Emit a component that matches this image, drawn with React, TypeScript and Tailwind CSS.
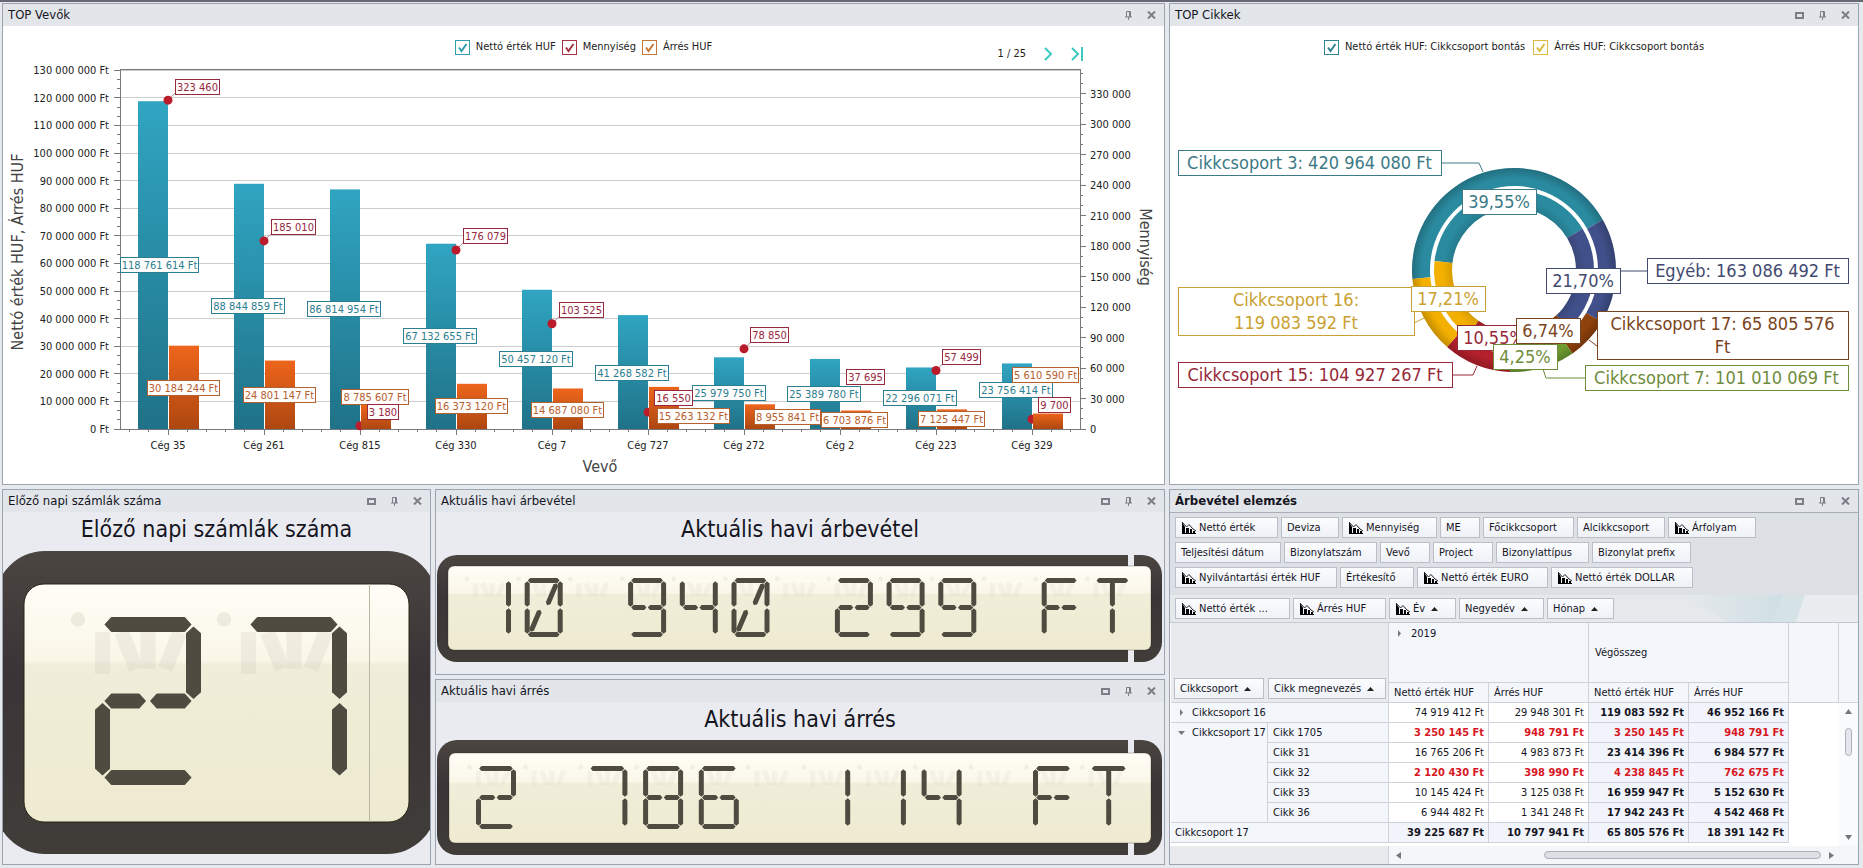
import type { ReactNode } from "react"

const categories = [
  { name: "Cég 35", net: 118761614, margin: 30184244, qty: 323460 },
  { name: "Cég 261", net: 88844859, margin: 24801147, qty: 185010 },
  { name: "Cég 815", net: 86814954, margin: 8785607, qty: 3180 },
  { name: "Cég 330", net: 67132655, margin: 16373120, qty: 176079 },
  { name: "Cég 7", net: 50457120, margin: 14687080, qty: 103525 },
  { name: "Cég 727", net: 41268582, margin: 15263132, qty: 16550 },
  { name: "Cég 272", net: 25979750, margin: 8955841, qty: 78850 },
  { name: "Cég 2", net: 25389780, margin: 6703876, qty: 37695 },
  { name: "Cég 223", net: 22296071, margin: 7125447, qty: 57499 },
  { name: "Cég 329", net: 23756414, margin: 5610590, qty: 9700 },
]

const TEAL = "#2a7f92"
const ORANGE = "#b5602f"
const RED = "#96283f"

// label boxes after overlap resolution: left, top, width, text, colour
const barLabels: [number, number, number, string, string][] = [
  [176, 79, 45, "323 460", RED],
  [272, 219, 45, "185 010", RED],
  [464, 228, 45, "176 079", RED],
  [560, 302, 45, "103 525", RED],
  [751, 327, 39, "78 850", RED],
  [847, 369, 39, "37 695", RED],
  [943, 349, 39, "57 499", RED],
  [121, 257, 79, "118 761 614 Ft", TEAL],
  [212, 298, 74, "88 844 859 Ft", TEAL],
  [308, 301, 74, "86 814 954 Ft", TEAL],
  [404, 328, 74, "67 132 655 Ft", TEAL],
  [500, 351, 74, "50 457 120 Ft", TEAL],
  [596, 365, 74, "41 268 582 Ft", TEAL],
  [693, 385, 74, "25 979 750 Ft", TEAL],
  [788, 386, 74, "25 389 780 Ft", TEAL],
  [884, 390, 74, "22 296 071 Ft", TEAL],
  [980, 382, 74, "23 756 414 Ft", TEAL],
  [148, 380, 73, "30 184 244 Ft", ORANGE],
  [244, 387, 73, "24 801 147 Ft", ORANGE],
  [342, 389, 68, "8 785 607 Ft", ORANGE],
  [436, 398, 73, "16 373 120 Ft", ORANGE],
  [532, 402, 73, "14 687 080 Ft", ORANGE],
  [658, 408, 73, "15 263 132 Ft", ORANGE],
  [755, 409, 67, "8 955 841 Ft", ORANGE],
  [822, 412, 67, "6 703 876 Ft", ORANGE],
  [919, 411, 67, "7 125 447 Ft", ORANGE],
  [1013, 367, 67, "5 610 590 Ft", ORANGE],
  [368, 404, 32, "3 180", RED],
  [655, 390, 39, "16 550", RED],
  [1039, 397, 33, "9 700", RED],
]

const BASE = 429
const LEFT = 121
const RIGHT = 1081
const yMoney = (v: number) => BASE - (v / 10000000) * 27.6
const yQty = (v: number) => BASE - (v / 30000) * 30.5
const xCat = (i: number) => LEFT + 48 + i * 96
const spaced = (n: number) => n.toString().replace(/\B(?=(\d{3})+(?!\d))/g, " ")
const range = (n: number) => Array.from({ length: n }, (_, i) => i)

function WindowButtons({ max = true }: { max?: boolean }) {
  return (
    <div className="flex items-center gap-[7px] pr-[5px] text-[#7b7e86]">
      {max && (
        <button aria-label="Maximize" className="flex h-4 w-4 items-center justify-center">
          <svg width="9" height="7" viewBox="0 0 9 7" fill="none" stroke="currentColor" strokeWidth="2">
            <rect x="1" y="1" width="7" height="5" />
          </svg>
        </button>
      )}
      <button aria-label="Pin" className="flex h-4 w-4 items-center justify-center">
        <svg width="7" height="9" viewBox="0 0 7 9" fill="none" stroke="currentColor">
          <path d="M1.500 6V.5h4V6M4.500 1v5M0 6h7M3.500 6v3" />
        </svg>
      </button>
      <button aria-label="Close" className="flex h-4 w-4 items-center justify-center">
        <svg width="9" height="8" viewBox="0 0 9 8" fill="none" stroke="currentColor" strokeWidth="2">
          <path d="M1 .5l7 7M8 .5l-7 7" />
        </svg>
      </button>
    </div>
  )
}

function Panel({
  title,
  children,
  bold = false,
  max = true,
  body = "bg-white",
}: {
  title: string
  children: ReactNode
  bold?: boolean
  max?: boolean
  body?: string
}) {
  return (
    <section className="flex min-h-0 min-w-0 flex-col overflow-hidden border border-[#9ba2b0] bg-[#e2e5e9]">
      <header className="flex h-[22px] shrink-0 items-center justify-between pl-[5px]">
        <h2 className={bold ? "text-[13px] font-bold leading-4" : "text-[13px] leading-4"}>{title}</h2>
        <WindowButtons max={max} />
      </header>
      <div className={"flex min-h-0 flex-1 flex-col " + body}>{children}</div>
    </section>
  )
}

function LegendItem({ label, color }: { label: string; color: string }) {
  return (
    <label className="flex items-center gap-[6px] text-[11px] leading-4" style={{ color }}>
      <span className="relative flex">
        <input type="checkbox" defaultChecked className="h-[15px] w-[15px] appearance-none border border-current bg-white" />
        <svg className="pointer-events-none absolute left-0 top-0" width="15" height="15" fill="none" stroke="currentColor" strokeWidth="2">
          <path d="M4 7.5l2.5 3.5L11.500 4" />
        </svg>
      </span>
      <span className="text-[#222]">{label}</span>
    </label>
  )
}

function BarChart() {
  return (
    <svg viewBox="4 68 1161 416" className="block min-h-0 w-full flex-1 overflow-visible text-[11px]">
      <defs>
        <linearGradient id="net" x1="0" y1="0" x2="0" y2="1">
          <stop offset="0" stopColor="#30a5c2" />
          <stop offset="1" stopColor="#1f7287" />
        </linearGradient>
        <linearGradient id="margin" x1="0" y1="0" x2="0" y2="1">
          <stop offset="0" stopColor="#ee651b" />
          <stop offset="1" stopColor="#ad4710" />
        </linearGradient>
      </defs>

      <g shapeRendering="crispEdges">
        {range(13).map((i) => (
          <path key={i} d={`M${LEFT} ${yMoney((i + 1) * 10000000)}H${RIGHT}`} stroke="#cdcdcd" />
        ))}
        <path d={`M${LEFT} ${BASE + 0.5}V69H${RIGHT}V${BASE + 0.5}Z`} fill="none" stroke="#77777c" />
        {range(40).map((i) => {
          const y = yMoney((i * 10000000) / 3)
          return <path key={i} d={`M${i % 3 === 0 ? LEFT - 6 : LEFT - 3} ${y}H${LEFT}`} stroke="#77777c" />
        })}
        {range(36).map((i) => (
          <path key={i} d={`M${RIGHT} ${yQty(i * 10000)}h${i % 3 === 0 ? 6 : 3}`} stroke="#77777c" />
        ))}
        {range(50).map((i) => (
          <path key={i} d={`M${LEFT + 9.6 + i * 19.2} ${BASE}v${i % 5 === 2 ? 6 : 3}`} stroke="#77777c" />
        ))}
      </g>

      {categories.map((c, i) => (
        <rect key={c.name} x={xCat(i) - 30} y={yMoney(c.net)} width="30" height={BASE - yMoney(c.net)} fill="url(#net)" />
      ))}
      {categories.map((c, i) => (
        <g key={c.name}>
          {c.qty > 50000 && (
            <path d={`M${xCat(i)} ${yQty(c.qty)}l9 -9`} stroke="#b58a96" />
          )}
          <circle cx={xCat(i)} cy={yQty(c.qty)} r="4.500" fill="#bb1c2c" />
        </g>
      ))}
      {categories.map((c, i) => (
        <rect key={c.name} x={xCat(i) + 1} y={yMoney(c.margin)} width="30" height={BASE - yMoney(c.margin)} fill="url(#margin)" />
      ))}

      {barLabels.map(([x, y, w, text, color]) => (
        <g key={text}>
          <rect x={x + 0.5} y={y + 0.5} width={w - 1} height="15" fill="#fffdfc" stroke={color} />
          <text x={x + w / 2} y={y + 12} textAnchor="middle" fill={color}>
            {text}
          </text>
        </g>
      ))}

      <g fill="#222">
        {range(14).map((i) => (
          <text key={i} x="110" y={yMoney(i * 10000000) + 4} textAnchor="end">
            {spaced(i * 10000000)} Ft
          </text>
        ))}
        {range(12).map((i) => (
          <text key={i} x="1091" y={yQty(i * 30000) + 4}>
            {spaced(i * 30000)}
          </text>
        ))}
        {categories.map((c, i) => (
          <text key={c.name} x={xCat(i)} y="449" textAnchor="middle">
            {c.name}
          </text>
        ))}
      </g>
      <g fill="#444" className="text-[16px]" textAnchor="middle">
        <text x="601" y="472">Vevő</text>
        <text transform="translate(24 252) rotate(-90)">Nettó érték HUF, Árrés HUF</text>
        <text transform="translate(1141 247) rotate(90)">Mennyiség</text>
      </g>
    </svg>
  )
}

const CX = 1515
const CY = 270

function arc(r0: number, r1: number, from: number, to: number) {
  const pt = (r: number, deg: number) => {
    const a = ((deg - 90) * Math.PI) / 180
    return `${(CX + r * Math.cos(a)).toFixed(2)} ${(CY + r * Math.sin(a)).toFixed(2)}`
  }
  const large = to - from > 180 ? 1 : 0
  return `M${pt(r1, from)}A${r1} ${r1} 0 ${large} 1 ${pt(r1, to)}L${pt(r0, to)}A${r0} ${r0} 0 ${large} 0 ${pt(r0, from)}Z`
}

const outerRing: [number, number, string][] = [
  [-95, 60.5, "#2a8a9f"],
  [60.5, 120.7, "#41508a"],
  [120.7, 145, "#8f410b"],
  [145, 182.3, "#6f9c30"],
  [182.3, 221, "#b4202c"],
  [221, 265, "#f4b000"],
]

const innerRing: [number, number, string][] = [
  [-83.5, 59, "#2a8a9f"],
  [59, 137, "#41508a"],
  [137, 161, "#8f410b"],
  [161, 177, "#6f9c30"],
  [177, 215, "#b4202c"],
  [215, 276.5, "#f4b000"],
]

const pieLabels: { x: number; y: number; w: number; h: number; color: string; lines: string[]; lead?: string }[] = [
  { x: 1179, y: 150, w: 263, h: 26, color: "#3c7a87", lines: ["Cikkcsoport 3: 420 964 080 Ft"], lead: "M1442 163h38l4 9" },
  { x: 1648, y: 258, w: 201, h: 26, color: "#434a70", lines: ["Egyéb: 163 086 492 Ft"], lead: "M1617 271h31" },
  { x: 1598, y: 311, w: 251, h: 49, color: "#7a4420", lines: ["Cikkcsoport 17: 65 805 576", "Ft"], lead: "M1590 340l8 6" },
  { x: 1586, y: 365, w: 263, h: 26, color: "#6f8c3c", lines: ["Cikkcsoport 7: 101 010 069 Ft"], lead: "M1586 378h-39l-3 -9" },
  { x: 1179, y: 287, w: 236, h: 49, color: "#c9a132", lines: ["Cikkcsoport 16:", "119 083 592 Ft"], lead: "M1415 323l10 -5" },
  { x: 1179, y: 362, w: 274, h: 26, color: "#962838", lines: ["Cikkcsoport 15: 104 927 267 Ft"], lead: "M1453 375h21l4 -9" },
  { x: 1463, y: 189, w: 74, h: 26, color: "#3c7a87", lines: ["39,55%"] },
  { x: 1547, y: 268, w: 74, h: 26, color: "#434a70", lines: ["21,70%"] },
  { x: 1412, y: 286, w: 74, h: 26, color: "#c9a132", lines: ["17,21%"] },
  { x: 1458, y: 325, w: 74, h: 26, color: "#962838", lines: ["10,55%"] },
  { x: 1494, y: 344, w: 64, h: 26, color: "#6f8c3c", lines: ["4,25%"] },
  { x: 1517, y: 318, w: 64, h: 26, color: "#7a4420", lines: ["6,74%"] },
]

function DonutChart() {
  return (
    <svg viewBox="1171 68 688 416" className="block min-h-0 w-full flex-1 text-[18px]">
      <defs>
        <radialGradient id="shade" gradientUnits="userSpaceOnUse" cx={CX} cy={CY} r="102">
          <stop offset="0.6" stopColor="#000" stopOpacity="0.12" />
          <stop offset="0.7" stopColor="#000" stopOpacity="0" />
          <stop offset="0.9" stopColor="#000" stopOpacity="0" />
          <stop offset="1" stopColor="#000" stopOpacity="0.2" />
        </radialGradient>
      </defs>
      {outerRing.map(([a, b, color]) => (
        <path key={color} d={arc(84, 102, a, b)} fill={color} />
      ))}
      {innerRing.map(([a, b, color]) => (
        <path key={color} d={arc(62, 80, a, b)} fill={color} />
      ))}
      <circle cx={CX} cy={CY} r="93" fill="none" stroke="url(#shade)" strokeWidth="18" />
      <circle cx={CX} cy={CY} r="71" fill="none" stroke="url(#shade)" strokeWidth="18" />
      {pieLabels.map((l) => (
        <g key={l.lines[0]}>
          {l.lead && <path d={l.lead} fill="none" stroke={l.color} />}
          <rect x={l.x + 0.5} y={l.y + 0.5} width={l.w} height={l.h - 1} fill="#fff" stroke={l.color} />
          {l.lines.map((line, i) => (
            <text key={line} x={l.x + l.w / 2} y={l.y + 19 + i * 23} textAnchor="middle" fill={l.color}>
              {line}
            </text>
          ))}
        </g>
      ))}
    </svg>
  )
}

// Segments in a unit cell: a top, b/c right, d bottom, e/f left, g/h middle halves,
// i/j slash of the zero, k/l centre stem
const segments: Record<string, [number, number, number, number]> = {
  a: [0, 0, 1, 0],
  b: [1, 0, 1, 0.5],
  c: [1, 0.5, 1, 1],
  d: [0, 1, 1, 1],
  e: [0, 0.5, 0, 1],
  f: [0, 0, 0, 0.5],
  g: [0, 0.5, 0.5, 0.5],
  h: [0.5, 0.5, 1, 0.5],
  i: [0.9, 0.04, 0.6, 0.47],
  j: [0.4, 0.53, 0.1, 0.96],
  k: [0.5, 0, 0.5, 0.5],
  l: [0.5, 0.5, 0.5, 1],
}

const glyphs: Record<string, string> = {
  "0": "abcdefij",
  "1": "bc",
  "2": "abghed",
  "4": "fghbc",
  "6": "afghecd",
  "7": "abc",
  "8": "abcdefgh",
  "9": "abfghcd",
  F: "afghe",
  T: "akl",
}

type LcdProps = {
  text: string
  viewBox: string
  frame: [number, number, number, number, number]
  screen: [number, number, number, number, number]
  x: number
  y: number
  w: number
  h: number
  t: number
  pitch: number
  seam?: "line" | "gap"
}

function Lcd({ text, viewBox, frame, screen, x, y, w, h, t, pitch, seam = "gap" }: LcdProps) {
  const id = "lcd" + text.length
  const [sx, sy, sw, sh, sr] = screen
  const [fx, fy, fw, fh, fr] = frame
  const ghost = seam === "line" ? 0.3 : 0.18

  const draw = (name: string, ox: number) => {
    const [x1, y1, x2, y2] = segments[name]
    const px = (v: number) => ox + t / 2 + v * (w - t)
    const py = (v: number) => y + t / 2 + v * (h - t)
    const ax = px(x1)
    const ay = py(y1)
    const dx = px(x2) - ax
    const dy = py(y2) - ay
    const len = Math.hypot(dx, dy)
    const inset = (t * 0.58) / len
    return (
      <line
        key={name}
        x1={ax + dx * inset}
        y1={ay + dy * inset}
        x2={ax + dx * (1 - inset)}
        y2={ay + dy * (1 - inset)}
        markerStart={`url(#${id}tip)`}
        markerEnd={`url(#${id}tip)`}
      />
    )
  }

  return (
    <svg viewBox={viewBox} role="img" aria-label={text} className="block min-h-0 w-full flex-1">
      <defs>
        <marker id={id + "tip"} viewBox="0 0 10 10" refX="5" refY="5" markerWidth="1" markerHeight="1" orient="auto">
          <path d="M5 0L9.500 5 5 10 .5 5Z" fill="#504b41" />
        </marker>
        <linearGradient id={id + "frame"} x1="0" y1="0" x2="0" y2="1">
          <stop offset="0" stopColor="#4b4541" />
          <stop offset="0.4" stopColor="#3b3437" />
          <stop offset="1" stopColor="#403d39" />
        </linearGradient>
        <linearGradient id={id + "screen"} x1="0" y1="0" x2="0" y2="1">
          <stop offset="0" stopColor="#fffdf6" />
          <stop offset="0.32" stopColor="#faf7e9" />
          <stop offset="0.34" stopColor="#f0edd9" />
          <stop offset="1" stopColor="#efebd1" />
        </linearGradient>
      </defs>
      <rect x={fx} y={fy} width={fw} height={fh} rx={fr} fill={`url(#${id}frame)`} />
      {seam === "gap" && <rect x="1129" y={fy} width="6" height={fh} fill="#eaebf0" />}
      <rect x={sx} y={sy} width={sw} height={sh} rx={sr} fill={`url(#${id}screen)`} stroke="#2a2413" strokeOpacity={seam === "line" ? 1 : 0.3} />
      {seam === "line" && <path d={`M370.5 ${sy}v${sh}`} stroke="#b9b6a4" />}
      {[...text].map((ch, i) => (
        <g key={i} stroke="#d4d1c4" strokeOpacity={ghost} strokeWidth={t} fill="#d4d1c4" fillOpacity={ghost + 0.1}>
          <circle cx={x + i * pitch - w * 0.16} cy={y + h * 0.015} r={t * 0.48} stroke="none" />
          <path
            fill="none"
            d={`M${x + i * pitch + t / 2} ${y + t}v${h * 0.25}M${x + i * pitch + w * 0.25} ${y + t}l${w * 0.14} ${h * 0.22}M${x + i * pitch + w / 2} ${y + t}v${h * 0.22}M${x + i * pitch + w * 0.8} ${y + t}l${-w * 0.14} ${h * 0.22}`}
          />
        </g>
      ))}
      <g stroke="#504b41" strokeWidth={t}>
        {[...text].map((ch, i) => (
          <g key={i}>{[...(glyphs[ch] ?? "")].map((s) => draw(s, x + i * pitch))}</g>
        ))}
      </g>
    </svg>
  )
}

function ChartGlyph() {
  return (
    <svg width="16" height="14" viewBox="0 0 16 14" className="shrink-0" aria-hidden="true">
      <path d="M1 1v12h3V6zM5 7h3v6H5zM9 8h2v5H9zM12 10h2v3h-2z" fill="#000" />
      <path d="M1 12.500h14" stroke="#000" />
      <path d="M1 1l4.500 5L8 3.500l4 4.500 3 2" fill="none" stroke="#222" />
    </svg>
  )
}

type Field = { label: string; width: string; measure?: boolean; sort?: boolean }

function Chip({ label, width, measure, sort }: Field) {
  return (
    <button
      className={
        "flex h-[21px] shrink-0 items-center border border-[#b9bec9] bg-linear-to-b from-[#fbfcfe] to-[#eef1f6] pl-[5px] text-left text-[11px] leading-4 whitespace-nowrap " +
        width
      }
    >
      {measure && <ChartGlyph />}
      <span className={measure ? "pl-[2px]" : ""}>{label}</span>
      {sort && (
        <svg width="7" height="4" viewBox="0 0 7 4" className="ml-[6px]" aria-hidden="true">
          <path d="M0 4L3.500 0 7 4z" fill="#222" />
        </svg>
      )}
    </button>
  )
}

const filterRows: Field[][] = [
  [
    { label: "Nettó érték", width: "w-[103px]", measure: true },
    { label: "Deviza", width: "w-[58px]" },
    { label: "Mennyiség", width: "w-[95px]", measure: true },
    { label: "ME", width: "w-[40px]" },
    { label: "Főcikkcsoport", width: "w-[91px]" },
    { label: "Alcikkcsoport", width: "w-[88px]" },
    { label: "Árfolyam", width: "w-[88px]", measure: true },
  ],
  [
    { label: "Teljesítési dátum", width: "w-[106px]" },
    { label: "Bizonylatszám", width: "w-[93px]" },
    { label: "Vevő", width: "w-[50px]" },
    { label: "Project", width: "w-[60px]" },
    { label: "Bizonylattípus", width: "w-[93px]" },
    { label: "Bizonylat prefix", width: "w-[99px]" },
  ],
  [
    { label: "Nyilvántartási érték HUF", width: "w-[162px]", measure: true },
    { label: "Értékesítő", width: "w-[74px]" },
    { label: "Nettó érték EURO", width: "w-[131px]", measure: true },
    { label: "Nettó érték DOLLAR", width: "w-[142px]", measure: true },
  ],
]

const dataFields: Field[] = [
  { label: "Nettó érték ...", width: "w-[115px]", measure: true },
  { label: "Árrés HUF", width: "w-[93px]", measure: true },
  { label: "Év", width: "w-[67px]", measure: true, sort: true },
  { label: "Negyedév", width: "w-[85px]", sort: true },
  { label: "Hónap", width: "w-[67px]", sort: true },
]

const rows: { item: string; values: string[]; low?: boolean }[] = [
  { item: "Cikk 1705", values: ["3 250 145 Ft", "948 791 Ft", "3 250 145 Ft", "948 791 Ft"], low: true },
  { item: "Cikk 31", values: ["16 765 206 Ft", "4 983 873 Ft", "23 414 396 Ft", "6 984 577 Ft"] },
  { item: "Cikk 32", values: ["2 120 430 Ft", "398 990 Ft", "4 238 845 Ft", "762 675 Ft"], low: true },
  { item: "Cikk 33", values: ["10 145 424 Ft", "3 125 038 Ft", "16 959 947 Ft", "5 152 630 Ft"] },
  { item: "Cikk 36", values: ["6 944 482 Ft", "1 341 248 Ft", "17 942 243 Ft", "4 542 468 Ft"] },
]

function ValueCells({ values, low, total }: { values: string[]; low?: boolean; total?: boolean }) {
  return (
    <>
      {values.map((v, i) => {
        const tone = low ? "font-bold text-[#d8161f] " : total || i > 1 ? "font-bold " : ""
        const bg = total || i > 1 ? "bg-[#f1f4fa] " : "bg-white "
        return (
          <td key={i} className={"border-b border-r border-[#cdd2db] pr-1 text-right whitespace-nowrap " + tone + bg}>
            {v}
          </td>
        )
      })}
      <td className="bg-white" />
    </>
  )
}

function Expander({ open = false }: { open?: boolean }) {
  return (
    <button aria-label={open ? "Collapse" : "Expand"} className="inline-flex h-3 w-5 items-center justify-center">
      <svg width="7" height="7" viewBox="0 0 7 7" fill="#777">
        {open ? <path d="M0 2h7L3.500 6z" /> : <path d="M2 0v7l3-3.500z" />}
      </svg>
    </button>
  )
}

function PivotTable() {
  const line = "border-b border-r border-[#cdd2db] "
  return (
    <table className="w-full table-fixed border-separate border-spacing-0 text-[11px] leading-4">
      <colgroup>
        <col className="w-[97px]" />
        <col className="w-[121px]" />
        <col className="w-[100px]" />
        <col className="w-[100px]" />
        <col className="w-[100px]" />
        <col className="w-[100px]" />
        <col />
      </colgroup>
      <thead className="bg-[#f3f6fa] text-left">
        <tr className="h-[60px]">
          <th colSpan={2} rowSpan={2} className={line + "bg-[#e8eaee] pb-[3px] pl-[3px] align-bottom font-normal"}>
            <div className="flex gap-1">
              <Chip label="Cikkcsoport" width="w-[90px]" sort />
              <Chip label="Cikk megnevezés" width="w-[118px]" sort />
            </div>
          </th>
          <th colSpan={2} className={line + "pt-[3px] align-top font-normal"}>
            <Expander />
            <span className="pl-[2px]">2019</span>
          </th>
          <th colSpan={2} className={line + "pl-[6px] font-normal"}>Végösszeg</th>
          <th rowSpan={2} className={line} />
        </tr>
        <tr className="h-5">
          {["Nettó érték HUF", "Árrés HUF", "Nettó érték HUF", "Árrés HUF"].map((h, i) => (
            <th key={i} className={line + "pl-[5px] font-normal whitespace-nowrap"}>{h}</th>
          ))}
        </tr>
      </thead>
      <tbody>
        <tr className="h-5">
          <td colSpan={2} className={line + "bg-[#f3f6fa]"}>
            <Expander />
            <span className="pl-px">Cikkcsoport 16</span>
          </td>
          <ValueCells values={["74 919 412 Ft", "29 948 301 Ft", "119 083 592 Ft", "46 952 166 Ft"]} />
        </tr>
        {rows.map((r, i) => (
          <tr key={r.item} className="h-5">
            {i === 0 && (
              <td rowSpan={5} className={line + "bg-[#f3f6fa] pt-[2px] align-top whitespace-nowrap"}>
                <Expander open />
                <span className="pl-px">Cikkcsoport 17</span>
              </td>
            )}
            <td className={line + "bg-[#f3f6fa] pl-[5px]"}>{r.item}</td>
            <ValueCells values={r.values} low={r.low} />
          </tr>
        ))}
        <tr className="h-5">
          <td colSpan={2} className={line + "bg-[#f3f6fa] pl-1"}>Cikkcsoport 17</td>
          <ValueCells values={["39 225 687 Ft", "10 797 941 Ft", "65 805 576 Ft", "18 391 142 Ft"]} total />
        </tr>
      </tbody>
    </table>
  )
}

function Pivot() {
  return (
    <>
      <div className="flex h-[83px] shrink-0 flex-col gap-1 border-t border-[#a9afba] bg-[#dde0e4] pl-[5px] pt-1">
        {filterRows.map((row, i) => (
          <div key={i} className="flex gap-[3px]">
            {row.map((f) => (
              <Chip key={f.label} {...f} />
            ))}
          </div>
        ))}
      </div>
      <div className="flex h-7 shrink-0 items-center justify-between border-b border-[#c3c8d1] bg-[#e6e9ec] pl-[5px]">
        <div className="flex gap-[3px]">
          {dataFields.map((f) => (
            <Chip key={f.label} {...f} />
          ))}
        </div>
        <svg width="240" height="27" viewBox="0 0 240 27" aria-hidden="true">
          <defs>
            <linearGradient id="glare">
              <stop offset="0" stopColor="#d2e0e5" stopOpacity="0" />
              <stop offset="1" stopColor="#cfdfe3" />
            </linearGradient>
          </defs>
          <path d="M60 0h105l-10 27H110z" fill="url(#glare)" />
          <path d="M165 0h22l-9 27h-24z" fill="#d6e3e6" />
          <path d="M187 0h53v27h-62z" fill="#eaedef" />
        </svg>
      </div>
      <div className="flex min-h-0 flex-1 pl-px">
        <div className="min-w-0 flex-1">
          <PivotTable />
        </div>
        <div className="flex w-[19px] flex-col bg-white">
          <div className="h-20 border-b border-[#cdd2db] bg-[#f3f6fa]" />
          <div className="flex flex-1 flex-col items-center bg-[#fafbfc] py-[6px]">
            <svg width="7" height="5" fill="#777"><path d="M0 5L3.500 0 7 5z" /></svg>
            <div className="mt-[14px] h-7 w-[7px] rounded border border-[#a9afba] bg-[#e3e6ea]" />
            <svg width="7" height="5" fill="#777" className="mt-auto"><path d="M0 0h7L3.500 5z" /></svg>
          </div>
        </div>
      </div>
      <div className="flex h-[18px] shrink-0 bg-[#f5f6f9]">
        <div className="w-[219px] border-r border-[#cdd2db] bg-[#e8eaee]" />
        <div className="flex flex-1 items-center pl-[7px] pr-6">
          <svg width="5" height="7" fill="#777"><path d="M5 0v7L0 3.500z" /></svg>
          <div className="flex flex-1 justify-end pr-2">
            <div className="h-[8px] w-[277px] rounded-full border border-[#a9afba] bg-[#dcdfe4]" />
          </div>
          <svg width="5" height="7" fill="#777"><path d="M0 0v7l5-3.500z" /></svg>
        </div>
      </div>
    </>
  )
}

export default function App() {
  return (
    <main className="grid h-screen grid-cols-[1163fr_690fr] grid-rows-[482fr_376fr] gap-1 border-t-2 border-[#676873] bg-[#e6e9ee] pl-[2px] pr-1 pt-px pb-[3px] font-['DejaVu_Sans_Condensed','DejaVu_Sans','Noto_Sans',sans-serif] text-[#15151f]">
      <Panel title="TOP Vevők" max={false}>
        <div className="grid h-[42px] shrink-0 grid-cols-[1fr_auto_1fr] items-center">
          <span />
          <div className="flex gap-[6px]">
            <LegendItem label="Nettó érték HUF" color="#2f9db0" />
            <LegendItem label="Mennyiség" color="#a83246" />
            <LegendItem label="Árrés HUF" color="#c57838" />
          </div>
          <div className="flex items-center justify-end gap-4 pr-20 pt-[14px] text-[11px] leading-4 text-[#3cc9c2]">
            <span className="text-[#222]">1 / 25</span>
            <button aria-label="Next page">
              <svg width="12" height="14" fill="none" stroke="currentColor" strokeWidth="2"><path d="M3 1l6 6-6 6" /></svg>
            </button>
            <button aria-label="Last page">
              <svg width="14" height="14" fill="none" stroke="currentColor" strokeWidth="2"><path d="M2 1l6 6-6 6M12 0v14" /></svg>
            </button>
          </div>
        </div>
        <BarChart />
      </Panel>

      <Panel title="TOP Cikkek">
        <div className="flex h-[42px] shrink-0 items-center justify-center gap-2">
          <LegendItem label="Nettó érték HUF: Cikkcsoport bontás" color="#2f8595" />
          <LegendItem label="Árrés HUF: Cikkcsoport bontás" color="#dcba3c" />
        </div>
        <DonutChart />
      </Panel>

      <div className="grid min-h-0 grid-cols-[429fr_730fr] gap-1">
        <Panel title="Előző napi számlák száma" body="bg-[#eaebf0]">
          <h3 className="h-[35px] shrink-0 text-center text-[23px] leading-[34px]">Előző napi számlák száma</h3>
          <Lcd
            text="27"
            viewBox="4 547 427 317"
            frame={[-4, 551, 442, 303, 50]}
            screen={[25, 584, 385, 238, 20]}
            x={96}
            y={617}
            w={106}
            h={168}
            t={15}
            pitch={146}
            seam="line"
          />
        </Panel>
        <div className="grid min-h-0 grid-rows-2 gap-1">
          <Panel title="Aktuális havi árbevétel" body="bg-[#eaebf0]">
            <h3 className="h-[35px] shrink-0 text-center text-[23px] leading-[34px]">Aktuális havi árbevétel</h3>
            <Lcd
              text="10 940 299 FT"
              viewBox="437 547 728 127"
              frame={[438, 555, 725, 107, 20]}
              screen={[449, 566, 703, 84, 6]}
              x={474}
              y={578}
              w={38}
              h={59}
              t={5}
              pitch={51.7}
            />
          </Panel>
          <Panel title="Aktuális havi árrés" body="bg-[#eaebf0]">
            <h3 className="h-[35px] shrink-0 text-center text-[23px] leading-[34px]">Aktuális havi árrés</h3>
            <Lcd
              text="2 786 114 FT"
              viewBox="437 737 728 127"
              frame={[438, 740, 725, 115, 20]}
              screen={[450, 753, 702, 90, 6]}
              x={477}
              y={766}
              w={40}
              h={63}
              t={5}
              pitch={55.7}
            />
          </Panel>
        </div>
      </div>

      <Panel title="Árbevétel elemzés" bold body="bg-white">
        <Pivot />
      </Panel>
    </main>
  )
}
